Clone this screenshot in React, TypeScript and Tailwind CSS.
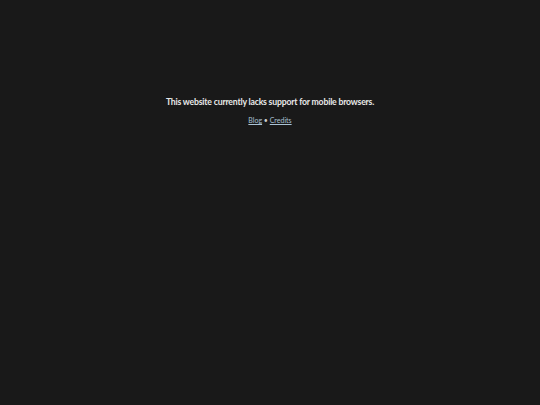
export default function App() {
  return (
    <div className="min-h-screen bg-[#191919] flex flex-col items-center pt-[96px] font-['Lato',sans-serif]">
      <p className="text-[8.7px] font-bold text-[#e8e8e8] leading-[11px] tracking-[-0.2px]">
        This website currently lacks support for mobile browsers.
      </p>
      <div className="mt-[9px] text-[7px] leading-[9px] text-[#cccccc]">
        <a href="#" className="text-[#a9c2d4] underline">Blog</a>
        {" • "}
        <a href="#" className="text-[#a9c2d4] underline">Credits</a>
      </div>
    </div>
  );
}
